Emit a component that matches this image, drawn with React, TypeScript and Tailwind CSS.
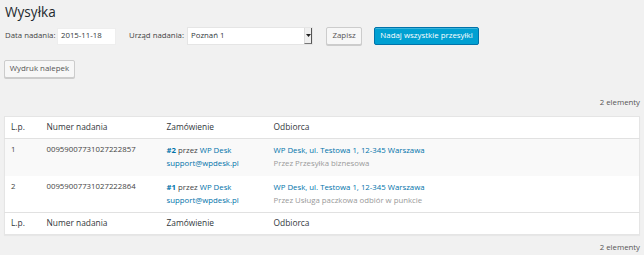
import React from "react";

const font = { fontFamily: '"Open Sans", "Liberation Sans", sans-serif' };

function Btn({ children, primary, w }: { children: React.ReactNode; primary?: boolean; w: string }) {
  return primary ? (
    <button className={`${w} h-[18px] whitespace-nowrap rounded-[2px] bg-[#00a0d2] border border-[#0073aa] text-white text-[7.9px] leading-none shadow-[inset_0_1px_0_rgba(120,200,230,0.5)]`}>
      {children}
    </button>
  ) : (
    <button className={`${w} h-[18px] whitespace-nowrap rounded-[2px] bg-[#f7f7f7] border border-[#cccccc] text-[#555] text-[7.9px] leading-none shadow-[0_1px_0_#ccc]`}>
      {children}
    </button>
  );
}

function HeadRow({ border }: { border: string }) {
  return (
    <tr className={`h-[22px] ${border} border-[#e1e1e1] text-[#32373c] text-[8.4px]`}>
      <th className="text-left font-normal pl-[6px]">L.p.</th>
      <th className="text-left font-normal pl-[6px]">Numer nadania</th>
      <th className="text-left font-normal pl-[6px]">Zamówienie</th>
      <th className="text-left font-normal pl-[6px]">Odbiorca</th>
    </tr>
  );
}

export default function App() {
  const rows = [
    { lp: "1", nr: "00959007731027222857", order: "#2", sub: "Przez Przesyłka biznesowa", bg: "bg-[#f9f9f9]" },
    { lp: "2", nr: "00959007731027222864", order: "#1", sub: "Przez Usługa paczkowa odbiór w punkcie", bg: "bg-white" },
  ];
  return (
    <div style={font} className="w-[644px] h-[255px] bg-[#f1f1f1] text-[#444] text-[7.8px] px-[4px] overflow-hidden">
      <h1 className="text-[13.6px] leading-none text-[#23282d] pt-[5px] pl-[1px] h-[27px]">Wysyłka</h1>
      <div className="flex items-center h-[18px] whitespace-nowrap">
        <span className="ml-[1px] mr-[4px] w-[48px] shrink-0">Data nadania:</span>
        <div className="w-[59px] h-[17px] shrink-0 bg-white border border-[#eee] flex items-center px-[3px] text-[#32373c]">2015-11-18</div>
        <span className="ml-[13px] mr-[3px] w-[55px] shrink-0">Urząd nadania:</span>
        <div className="w-[126px] h-[18px] shrink-0 bg-white border border-[#e5e5e5] flex items-stretch">
          <div className="flex-1 flex items-center pl-[3px] text-[#32373c]">Poznań 1</div>
          <div className="w-[8px] bg-[#f0f0f0] border-r border-b border-r-[#555] border-b-[#777] border-l border-l-[#ddd] flex items-center justify-center">
            <svg width="5" height="3" viewBox="0 0 5 3"><path d="M0 0h5L2.5 3z" fill="#222" /></svg>
          </div>
        </div>
        <div className="ml-[13px] shrink-0"><Btn w="w-[36px]">Zapisz</Btn></div>
        <div className="ml-[12px] shrink-0"><Btn primary w="w-[105px]">Nadaj wszystkie przesyłki</Btn></div>
      </div>
      <div className="mt-[15px] h-[18px]"><Btn w="w-[71px]">Wydruk nalepek</Btn></div>
      <div className="h-[38px] flex items-end justify-end pb-[7px] text-[#555]">2 elementy</div>
      <table className="w-[636px] bg-white border border-[#e5e5e5] border-collapse table-fixed shadow-[0_1px_1px_rgba(0,0,0,0.04)]">
        <colgroup>
          <col className="w-[36px]" />
          <col className="w-[120px]" />
          <col className="w-[107px]" />
          <col />
        </colgroup>
        <thead>
          <HeadRow border="border-b" />
        </thead>
        <tbody>
          {rows.map((r) => (
            <tr key={r.lp} className={`h-[37px] align-top ${r.bg}`}>
              <td className="pl-[6px] pt-[5px] text-[#444]">{r.lp}</td>
              <td className="pl-[6px] pt-[5px] text-[#444]">{r.nr}</td>
              <td className="pl-[6px] pt-[5px] leading-[13px]">
                <div><span className="text-[#0073aa] font-bold">{r.order}</span> przez <span className="text-[#0073aa]">WP Desk</span></div>
                <div className="text-[#0073aa]">support@wpdesk.pl</div>
              </td>
              <td className="pl-[6px] pt-[5px] leading-[13px]">
                <div className="text-[#0073aa]">WP Desk, ul. Testowa 1, 12-345 Warszawa</div>
                <div className="text-[#999]">{r.sub}</div>
              </td>
            </tr>
          ))}
        </tbody>
        <tfoot>
          <HeadRow border="border-t" />
        </tfoot>
      </table>
      <div className="flex justify-end mt-[7px] text-[#555]">2 elementy</div>
    </div>
  );
}
